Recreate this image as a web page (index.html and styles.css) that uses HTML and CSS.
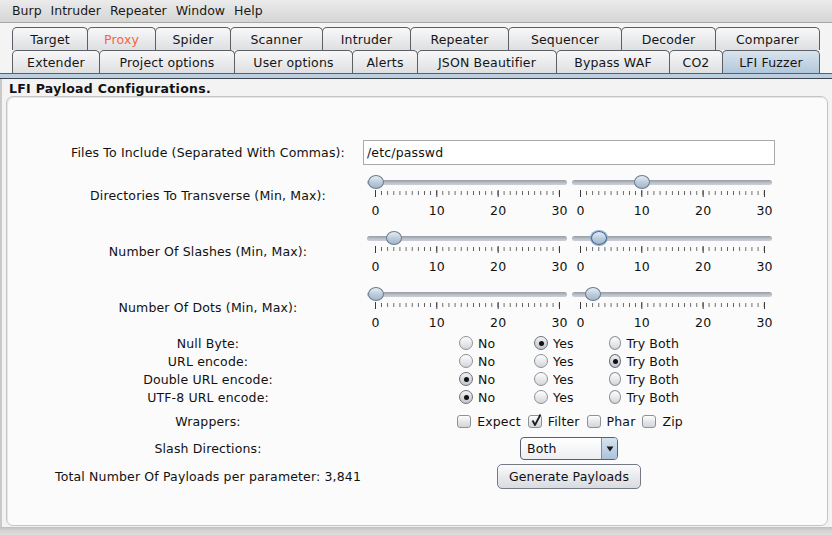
FILE: index.html
```html
<!DOCTYPE html>
<html>
<head>
<meta charset="utf-8">
<link rel="stylesheet" href="styles.css">
</head>
<body>
<div class="app">
  <div class="menubar">
    <span>Burp</span><span>Intruder</span><span>Repeater</span><span>Window</span><span>Help</span>
  </div>
  <div class="tabs">
    <div class="tabrow">
      <div class="tab t-target">Target</div>
      <div class="tab t-proxy hot">Proxy</div>
      <div class="tab t-spider">Spider</div>
      <div class="tab t-scanner">Scanner</div>
      <div class="tab t-intruder">Intruder</div>
      <div class="tab t-repeater">Repeater</div>
      <div class="tab t-sequencer">Sequencer</div>
      <div class="tab t-decoder">Decoder</div>
      <div class="tab t-comparer">Comparer</div>
    </div>
    <div class="tabrow">
      <div class="tab t-extender">Extender</div>
      <div class="tab t-project">Project options</div>
      <div class="tab t-user">User options</div>
      <div class="tab t-alerts">Alerts</div>
      <div class="tab t-json">JSON Beautifier</div>
      <div class="tab t-waf">Bypass WAF</div>
      <div class="tab t-co2">CO2</div>
      <div class="tab t-lfi selected">LFI Fuzzer</div>
    </div>
  </div>
  <div class="band"></div>
  <div class="content">
    <div class="heading">LFI Payload Configurations.</div>
    <div class="panel">
      <div class="form">
        <div class="row r-files">
          <div class="lbl">Files To Include (Separated With Commas):</div>
          <div class="ctl"><div class="textfield">/etc/passwd</div></div>
        </div>

        <div class="row r-slider first">
          <div class="lbl">Directories To Transverse (Min, Max):</div>
          <div class="ctl sliders">
            <div class="slider">
              <div class="track"></div>
              <div class="thumb" style="--v:0"></div>
              <div class="ticks"></div>
              <div class="nums"><span><b>0</b></span><span><b>10</b></span><span><b>20</b></span><span><b>30</b></span></div>
            </div>
            <div class="slider">
              <div class="track"></div>
              <div class="thumb" style="--v:10"></div>
              <div class="ticks"></div>
              <div class="nums"><span><b>0</b></span><span><b>10</b></span><span><b>20</b></span><span><b>30</b></span></div>
            </div>
          </div>
        </div>

        <div class="row r-slider">
          <div class="lbl">Number Of Slashes (Min, Max):</div>
          <div class="ctl sliders">
            <div class="slider">
              <div class="track"></div>
              <div class="thumb" style="--v:3"></div>
              <div class="ticks"></div>
              <div class="nums"><span><b>0</b></span><span><b>10</b></span><span><b>20</b></span><span><b>30</b></span></div>
            </div>
            <div class="slider">
              <div class="track"></div>
              <div class="thumb focus" style="--v:3"></div>
              <div class="ticks"></div>
              <div class="nums"><span><b>0</b></span><span><b>10</b></span><span><b>20</b></span><span><b>30</b></span></div>
            </div>
          </div>
        </div>

        <div class="row r-slider">
          <div class="lbl">Number Of Dots (Min, Max):</div>
          <div class="ctl sliders">
            <div class="slider">
              <div class="track"></div>
              <div class="thumb" style="--v:0"></div>
              <div class="ticks"></div>
              <div class="nums"><span><b>0</b></span><span><b>10</b></span><span><b>20</b></span><span><b>30</b></span></div>
            </div>
            <div class="slider">
              <div class="track"></div>
              <div class="thumb" style="--v:2"></div>
              <div class="ticks"></div>
              <div class="nums"><span><b>0</b></span><span><b>10</b></span><span><b>20</b></span><span><b>30</b></span></div>
            </div>
          </div>
        </div>

        <div class="row r-radio first">
          <div class="lbl">Null Byte:</div>
          <div class="ctl opts">
            <div class="opt"><span class="radio"></span>No</div>
            <div class="opt"><span class="radio on"></span>Yes</div>
            <div class="opt"><span class="radio"></span>Try Both</div>
          </div>
        </div>
        <div class="row r-radio">
          <div class="lbl">URL encode:</div>
          <div class="ctl opts">
            <div class="opt"><span class="radio"></span>No</div>
            <div class="opt"><span class="radio"></span>Yes</div>
            <div class="opt"><span class="radio on"></span>Try Both</div>
          </div>
        </div>
        <div class="row r-radio">
          <div class="lbl">Double URL encode:</div>
          <div class="ctl opts">
            <div class="opt"><span class="radio on"></span>No</div>
            <div class="opt"><span class="radio"></span>Yes</div>
            <div class="opt"><span class="radio"></span>Try Both</div>
          </div>
        </div>
        <div class="row r-radio">
          <div class="lbl">UTF-8 URL encode:</div>
          <div class="ctl opts">
            <div class="opt"><span class="radio on"></span>No</div>
            <div class="opt"><span class="radio"></span>Yes</div>
            <div class="opt"><span class="radio"></span>Try Both</div>
          </div>
        </div>

        <div class="row r-wrap">
          <div class="lbl">Wrappers:</div>
          <div class="ctl checks">
            <div class="chk"><span class="box"></span>Expect</div>
            <div class="chk"><span class="box on"><svg viewBox="0 0 14 14" width="14" height="14"><path d="M3.5 6.5 L6 11 L11.5 0.5" fill="none" stroke="#1e1e1e" stroke-width="1.8" stroke-linejoin="round"/></svg></span>Filter</div>
            <div class="chk"><span class="box"></span>Phar</div>
            <div class="chk"><span class="box"></span>Zip</div>
          </div>
        </div>

        <div class="row r-combo">
          <div class="lbl">Slash Directions:</div>
          <div class="ctl center">
            <div class="combo"><span class="combo-text">Both</span><span class="combo-btn"><svg viewBox="0 0 8 6" width="8" height="6"><path d="M0.5 0.5 L7.5 0.5 L4 5.5 Z" fill="#1b1b1b"/></svg></span></div>
          </div>
        </div>

        <div class="row r-button">
          <div class="lbl">Total Number Of Payloads per parameter: 3,841</div>
          <div class="ctl center">
            <div class="button">Generate Payloads</div>
          </div>
        </div>
      </div>
    </div>
  </div>
  <div class="statusbar"></div>
</div>
</body>
</html>
```

FILE: styles.css
```css
* { box-sizing: border-box; }

html, body {
  margin: 0;
  padding: 0;
}

body {
  font-family: "DejaVu Sans", "Noto Sans", sans-serif;
  font-size: 12.5px;
  letter-spacing: 0.15px;
  color: #111;
  background: #f3f3f3;
}

.app {
  width: 832px;
  height: 535px;
  display: flex;
  flex-direction: column;
  overflow: hidden;
}

/* menu bar */
.menubar {
  height: 23px;
  display: flex;
  align-items: center;
  gap: 9px;
  padding: 0 0 1px 12px;
  background: linear-gradient(#ebebeb, #d5d5d5);
  border-bottom: 1px solid #a9a9a9;
  color: #1a1a1a;
  letter-spacing: 0;
}

/* tabs */
.tabs {
  padding: 4px 0 0 12px;
  background: #f4f4f5;
}

.tabrow {
  display: flex;
  height: 23px;
}

.tab {
  height: 100%;
  display: flex;
  align-items: center;
  justify-content: center;
  border: 1px solid #5c5f64;
  border-bottom: none;
  border-radius: 5px 5px 0 0;
  background: linear-gradient(#f8f8f9, #dedfe2);
  color: #151515;
  white-space: nowrap;
  padding-top: 1px;
}

.tab + .tab { margin-left: -1px; }

.tab.hot { color: #f4663a; }

.tab.selected {
  background: linear-gradient(#d9e4ee, #b2c7db);
  position: relative;
  z-index: 1;
  margin-bottom: -1px;
}

.t-target { width: 76px; }
.t-proxy { width: 69px; }
.t-spider { width: 76px; }
.t-scanner { width: 93px; }
.t-intruder { width: 89px; }
.t-repeater { width: 99px; }
.t-sequencer { width: 114px; }
.t-decoder { width: 95px; }
.t-comparer { width: 105px; }

.t-extender { width: 88px; }
.t-project { width: 136px; }
.t-user { width: 119px; }
.t-alerts { width: 66px; }
.t-json { width: 140px; }
.t-waf { width: 114px; }
.t-co2 { width: 54px; }
.t-lfi { width: 98px; }

.band {
  height: 6px;
  background: #bccfe1;
  border-top: 1px solid #5a6069;
  border-bottom: 1px solid #3f454d;
}

/* content */
.content {
  flex: 1;
  display: flex;
  flex-direction: column;
  border-left: 2px solid #c9c9c9;
  background: #f3f3f3;
}

.heading {
  height: 17px;
  padding: 2px 0 0 7px;
  font-weight: bold;
  font-size: 12.5px;
  letter-spacing: 0.3px;
  color: #111;
}

.panel {
  flex: 1;
  margin: 0 4px 1px 4px;
  border: 1px solid #c4c4c4;
  border-radius: 7px;
  background: #fbfbfb;
  box-shadow: inset 1px 1px 0 #e6e6e6;
}

.form {
  padding: 43px 0 0 48px;
  display: flex;
  flex-direction: column;
}

.row {
  display: grid;
  grid-template-columns: 306px 412px;
  column-gap: 2px;
  align-items: center;
}

.lbl {
  text-align: center;
  white-space: nowrap;
}

.r-files { height: 25px; }
.r-slider { height: 44px; margin-top: 12px; }
.r-slider.first { margin-top: 7px; }
.r-radio { height: 18px; }
.r-radio.first { margin-top: 6px; }
.r-wrap { height: 18px; margin-top: 6px; }
.r-combo { height: 23px; margin-top: 7px; }
.r-button { height: 25px; margin-top: 4px; }

.ctl { height: 100%; }

.textfield {
  height: 25px;
  border: 1px solid #a9a9a9;
  background: #fff;
  padding: 0 0 0 3px;
  display: flex;
  align-items: center;
  color: #111;
}

/* sliders */
.sliders {
  display: flex;
  gap: 5px;
  padding-left: 4px;
  align-items: flex-start;
}

.slider {
  position: relative;
  width: 200px;
}

.track {
  height: 5px;
  margin-top: 8px;
  border-radius: 3px;
  background: linear-gradient(#959ca6, #bfc3c9 60%, #cdd0d5);
}

.thumb {
  position: absolute;
  top: 3px;
  left: calc(8.5px + var(--v) * 184px / 30 - 8px);
  width: 16px;
  height: 14px;
  border-radius: 50%;
  border: 1px solid #6a7c91;
  background: linear-gradient(#e6edf3, #bccbdb 55%, #a3b6ca);
}

.thumb.focus {
  border-color: #3d6b98;
  box-shadow: 0 0 0 1px #8fb1d3;
}

.ticks {
  margin: 5px 0 0 8px;
  width: 185px;
  height: 7px;
  background:
    linear-gradient(to right, #3a3a3a 1px, transparent 1px) 0 0 / calc((100% - 1px) / 3) 7px repeat-x,
    linear-gradient(to right, #555 1px, transparent 1px) 0 1px / calc((100% - 1px) / 30) 4px repeat-x;
}

.nums {
  margin: 7px 0 0 8px;
  width: 185px;
  display: flex;
  justify-content: space-between;
  line-height: 14px;
}

.nums span {
  width: 1px;
  display: flex;
  justify-content: center;
}

.nums b {
  font-weight: normal;
  white-space: nowrap;
}

/* radios */
.opts {
  display: grid;
  grid-template-columns: 75px 75px 70px;
  justify-content: center;
  align-items: center;
}

.opt {
  display: flex;
  align-items: center;
  gap: 5px;
  white-space: nowrap;
}

.radio {
  width: 14px;
  height: 14px;
  border-radius: 50%;
  border: 1px solid #8e9196;
  background: linear-gradient(#fefefe, #e9eaec 50%, #d3d5d9);
  display: flex;
  align-items: center;
  justify-content: center;
}

.radio.on {
  border-color: #6d7077;
  background: linear-gradient(#f4f5f6, #d6d9de 50%, #c3c7cd);
}

.radio.on::after {
  content: "";
  width: 5px;
  height: 5px;
  border-radius: 50%;
  background: #111;
}

/* checkboxes */
.checks {
  display: flex;
  justify-content: center;
  align-items: center;
  gap: 7px;
  padding-left: 2px;
}

.chk {
  display: flex;
  align-items: center;
  gap: 6px;
  white-space: nowrap;
}

.box {
  width: 14px;
  height: 13px;
  border: 1px solid #8e9196;
  border-radius: 3px;
  background: linear-gradient(#fefefe, #e6e7ea 50%, #d3d5d9);
  position: relative;
}

.box svg {
  position: absolute;
  left: 0;
  top: -2px;
}

/* combo + button */
.center {
  display: flex;
  justify-content: center;
  align-items: center;
}

.combo {
  width: 98px;
  height: 23px;
  border: 1px solid #58626f;
  border-radius: 4px;
  display: flex;
  overflow: hidden;
  background: linear-gradient(#ffffff, #eceef1);
}

.combo-text {
  flex: 1;
  padding-left: 6px;
  display: flex;
  align-items: center;
}

.combo-btn {
  width: 16px;
  border-left: 1px solid #7d90a6;
  background: linear-gradient(#d6e3ef, #abc3da);
  display: flex;
  align-items: center;
  justify-content: center;
}

.button {
  width: 144px;
  height: 25px;
  border: 1px solid #747a83;
  border-radius: 5px;
  background: linear-gradient(#fcfcfd, #e9eaed 50%, #d8dbe0);
  display: flex;
  align-items: center;
  justify-content: center;
  color: #111;
}

.statusbar {
  height: 8px;
  background: linear-gradient(#bdbdbd, #d3d3d3 40%, #dedede);
}
```
